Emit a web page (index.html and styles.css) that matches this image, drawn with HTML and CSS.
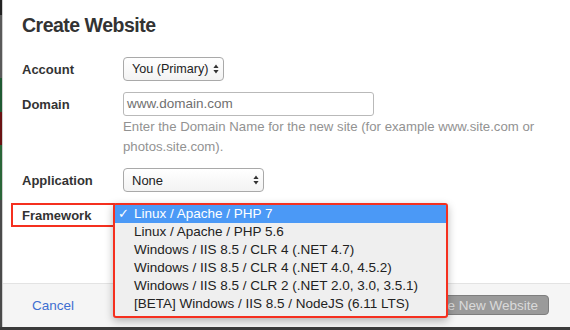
FILE: index.html
```html
<!DOCTYPE html>
<html lang="en">

<head>
    <meta charset="UTF-8" />
    <meta name="viewport" content="width=device-width, initial-scale=1" />
    <title>Create Website</title>
    <link rel="stylesheet" href="styles.css">
</head>

<body>
    <div class="screen">
        <div class="page-strip">
            <span class="seg seg-top"></span>
            <span class="seg seg-gray"></span>
            <span class="seg seg-green"></span>
            <span class="seg seg-red"></span>
            <span class="seg seg-green2"></span>
        </div>

        <div class="modal">
            <div class="modal-body">
                <h1 class="modal-title">Create Website</h1>

                <div class="form">
                    <div class="row">
                        <label class="label">Account</label>
                        <div class="field">
                            <div class="select select-account">
                                <span>You (Primary)</span>
                                <svg class="arrows" width="6" height="10" viewBox="0 0 6 10">
                                    <path d="M3 0.5 L5.6 4 L0.4 4 Z M3 9.5 L5.6 6 L0.4 6 Z" fill="#333" />
                                </svg>
                            </div>
                        </div>
                    </div>

                    <div class="row">
                        <label class="label">Domain</label>
                        <div class="field">
                            <div class="input">www.domain.com</div>
                            <p class="help">Enter the Domain Name for the new site (for example www.site.com or photos.site.com).</p>
                        </div>
                    </div>

                    <div class="row">
                        <label class="label">Application</label>
                        <div class="field">
                            <div class="select select-app">
                                <span>None</span>
                                <svg class="arrows" width="6" height="10" viewBox="0 0 6 10">
                                    <path d="M3 0.5 L5.6 4 L0.4 4 Z M3 9.5 L5.6 6 L0.4 6 Z" fill="#333" />
                                </svg>
                            </div>
                        </div>
                    </div>

                    <!-- linha marcada em vermelho -->
                    <div class="row row-framework">
                        <div class="mark-label"></div>
                        <label class="label">Framework</label>
                        <div class="field">
                            <div class="select select-app"></div>
                            <ul class="menu">
                                <li class="active"><span class="check">&#10003;</span>Linux / Apache / PHP 7</li>
                                <li>Linux / Apache / PHP 5.6</li>
                                <li>Windows / IIS 8.5 / CLR 4 (.NET 4.7)</li>
                                <li>Windows / IIS 8.5 / CLR 4 (.NET 4.0, 4.5.2)</li>
                                <li>Windows / IIS 8.5 / CLR 2 (.NET 2.0, 3.0, 3.5.1)</li>
                                <li>[BETA] Windows / IIS 8.5 / NodeJS (6.11 LTS)</li>
                            </ul>
                        </div>
                    </div>
                </div>
            </div>

            <div class="modal-footer">
                <a href="#" class="cancel">Cancel</a>
                <button class="btn-create" disabled>Create New Website</button>
            </div>
        </div>
    </div>
</body>

</html>
```

FILE: styles.css
```css
* {
    margin: 0;
    padding: 0;
    box-sizing: border-box;
}

body {
    font-family: 'Liberation Sans', Arial, sans-serif;
    background-color: #3b3b3b;
    width: 570px;
    height: 330px;
    overflow: hidden;
}

.screen {
    display: flex;
    height: 327px;
}

.page-strip {
    width: 2px;
    display: flex;
    flex-direction: column;
    background-color: #4a4a4a;
}

.seg-top {
    height: 15px;
    background-color: #222;
}

.seg-gray {
    height: 63px;
    background-color: #5a5a5a;
}

.seg-green {
    height: 34px;
    background-color: #1f5a32;
}

.seg-red {
    height: 33px;
    background-color: #6a1212;
}

.seg-green2 {
    height: 55px;
    background-color: #2a6638;
}

.modal {
    flex: 1;
    display: flex;
    flex-direction: column;
    background-color: #fff;
    border-left: 1px solid #cfcfcf;
}

.modal-body {
    flex: 1;
    padding: 13px 0 0 19px;
}

.modal-title {
    font-size: 19.5px;
    line-height: 24px;
    font-weight: bold;
    letter-spacing: -0.5px;
    color: #333;
    margin-bottom: 20px;
}

.form {
    display: flex;
    flex-direction: column;
    gap: 11px;
}

.row {
    display: flex;
    position: relative;
}

.label {
    width: 101px;
    height: 24px;
    padding-top: 1px;
    font-size: 13px;
    line-height: 24px;
    font-weight: bold;
    color: #333;
}

.field {
    position: relative;
}

.select {
    height: 24px;
    display: flex;
    align-items: center;
    justify-content: space-between;
    gap: 3px;
    padding: 0 4px 0 8px;
    border: 1px solid #a9a9a9;
    border-radius: 4px;
    background: linear-gradient(#fff, #f3f3f3);
    font-size: 13px;
    color: #222;
    white-space: nowrap;
}

.select-account {
    width: 101px;
    font-size: 12.6px;
}

.select-app {
    width: 141px;
}

.arrows {
    display: block;
    flex-shrink: 0;
}

.input {
    width: 251px;
    height: 24px;
    padding: 0 3px;
    border: 1px solid #b9b9b9;
    border-radius: 3px;
    font-size: 13.5px;
    line-height: 22px;
    color: #707070;
}

.help {
    width: 425px;
    margin-top: 1px;
    font-size: 13.2px;
    line-height: 20px;
    color: #929292;
}

/* marcacao vermelha */
.mark-label {
    position: absolute;
    left: -11px;
    top: 0;
    width: 104px;
    height: 24px;
    border: 2px solid #f5301f;
    border-right: none;
}

.menu {
    position: absolute;
    left: -10px;
    top: 0;
    width: 335px;
    padding: 0 0 3px;
    list-style: none;
    background-color: #efefef;
    border: 2px solid #f5301f;
    border-radius: 3px;
    box-shadow: 0 3px 8px rgba(0, 0, 0, 0.28);
}

.menu li {
    position: relative;
    height: 18px;
    padding-left: 19px;
    font-size: 13.5px;
    line-height: 18px;
    color: #222;
    white-space: nowrap;
}

.menu li.active {
    background-color: #4b99f6;
    color: #fff;
}

.check {
    position: absolute;
    left: 3px;
    top: 0;
    font-size: 13px;
    font-weight: bold;
    font-family: 'DejaVu Sans', sans-serif;
}

.modal-footer {
    height: 44px;
    display: flex;
    align-items: center;
    justify-content: space-between;
    padding: 0 21px 1px 29px;
    background-color: #f5f5f5;
    border-top: 1px solid #e3e3e3;
}

.cancel {
    font-size: 13.5px;
    color: #3e6fd1;
    text-decoration: none;
}

.btn-create {
    height: 20px;
    padding: 0 10px;
    font-family: 'Liberation Sans', Arial, sans-serif;
    font-size: 13.5px;
    color: #dadada;
    background-color: #9a9a9a;
    border: 1px solid #7e7e7e;
    border-radius: 4px;
}
```
